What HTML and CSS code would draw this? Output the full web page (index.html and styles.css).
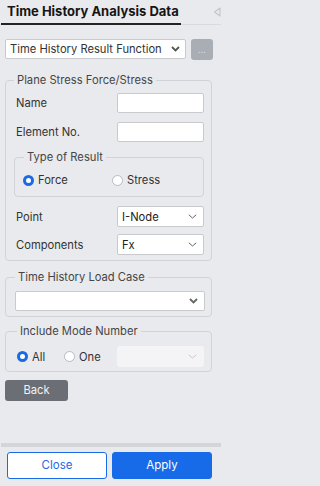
FILE: index.html
```html
<!DOCTYPE html>
<html>
<head>
<meta charset="utf-8">
<link rel="stylesheet" href="styles.css">
</head>
<body>
<div class="app">
  <div class="tabs">
    <div class="tab active">Time History Analysis Data</div>
    <div class="collapse">
      <svg width="8" height="10" viewBox="0 0 8 10"><path d="M7 1 L1.5 5 L7 9 Z" fill="none" stroke="#c4c6cb" stroke-width="1.2" stroke-linejoin="round"/></svg>
    </div>
  </div>

  <div class="main">
    <div class="top-row">
      <div class="select wide">
        <span class="select-text">Time History Result Function</span>
        <svg class="chev bold" width="9" height="6" viewBox="0 0 9 6"><path d="M1 1 L4.5 4.5 L8 1" fill="none" stroke="#555" stroke-width="1.8"/></svg>
      </div>
      <div class="more-btn">...</div>
    </div>

    <fieldset class="group g-plane">
      <legend>Plane Stress Force/Stress</legend>
      <div class="row">
        <span class="label">Name</span>
        <div class="input"></div>
      </div>
      <div class="row">
        <span class="label">Element No.</span>
        <div class="input"></div>
      </div>
      <fieldset class="group inner">
        <legend>Type of Result</legend>
        <div class="radios">
          <label class="radio r-force"><span class="dot on"></span>Force</label>
          <label class="radio r-stress"><span class="dot"></span>Stress</label>
        </div>
      </fieldset>
      <div class="row r-point">
        <span class="label">Point</span>
        <div class="select small">
          <span class="select-text">I-Node</span>
          <svg class="chev" width="9" height="5" viewBox="0 0 9 5"><path d="M0.8 0.8 L4.5 4 L8.2 0.8" fill="none" stroke="#666" stroke-width="1"/></svg>
        </div>
      </div>
      <div class="row r-comp">
        <span class="label">Components</span>
        <div class="select small">
          <span class="select-text">Fx</span>
          <svg class="chev" width="9" height="5" viewBox="0 0 9 5"><path d="M0.8 0.8 L4.5 4 L8.2 0.8" fill="none" stroke="#666" stroke-width="1"/></svg>
        </div>
      </div>
    </fieldset>

    <fieldset class="group g-load">
      <legend>Time History Load Case</legend>
      <div class="select full">
        <span class="select-text"></span>
        <svg class="chev bold" width="9" height="6" viewBox="0 0 9 6"><path d="M1 1 L4.5 4.5 L8 1" fill="none" stroke="#666" stroke-width="1.8"/></svg>
      </div>
    </fieldset>

    <fieldset class="group g-mode">
      <legend>Include Mode Number</legend>
      <div class="mode-row">
        <label class="radio r-all"><span class="dot on"></span>All</label>
        <label class="radio r-one"><span class="dot"></span>One</label>
        <div class="select small disabled">
          <span class="select-text"></span>
          <svg class="chev" width="9" height="5" viewBox="0 0 9 5"><path d="M0.8 0.8 L4.5 4 L8.2 0.8" fill="none" stroke="#c8c9cd" stroke-width="1"/></svg>
        </div>
      </div>
    </fieldset>

    <div class="back-btn">Back</div>
  </div>

  <div class="footer">
    <div class="btn close">Close</div>
    <div class="btn apply">Apply</div>
  </div>
</div>
</body>
</html>
```

FILE: styles.css
```css
* { box-sizing: border-box; }
html, body {
  margin: 0;
  padding: 0;
  background: #e9eaee;
}
body {
  font-family: Inter, "Noto Sans", "Liberation Sans", sans-serif;
  font-size: 11.2px;
  color: #333;
  width: 221px;
  height: 486px;
  overflow: hidden;
}
.app {
  display: flex;
  flex-direction: column;
  height: 486px;
}
.tabs {
  display: flex;
  flex: none;
  height: 25px;
  border-bottom: 1px solid #d9dadd;
  padding-left: 1px;
}
.tab {
  width: 180px;
  height: 25px;
  padding-left: 6px;
  padding-top: 3px;
  font-weight: 700;
  font-size: 13px;
  color: #151515;
  border-bottom: 2px solid #222;
  white-space: nowrap;
}
.collapse {
  margin-left: auto;
  padding-top: 6px;
}
.main {
  padding: 14px 0 0 5px;
  flex: 1;
}
.top-row {
  display: flex;
  align-items: flex-start;
  gap: 5px;
}
.select {
  background: #fff;
  border: 1px solid #c9cace;
  border-radius: 2px;
  height: 20px;
  display: flex;
  align-items: center;
  padding: 0 6px 0 4px;
  color: #222;
}
.select-text { flex: 1; white-space: nowrap; overflow: hidden; }
.select.wide { width: 181px; padding-right: 5px; }
.select.wide .select-text { color: #333; }
.select.small { width: 87px; height: 21px; }
.select.full { width: 190px; height: 20px; }
.select.disabled { background: #f4f4f6; border-color: #f4f4f6; }
.chev { flex: none; }
.more-btn {
  width: 22px;
  height: 21px;
  background: #a9adb4;
  border-radius: 3px;
  color: #d6d8dc;
  font-size: 9px;
  text-align: center;
  line-height: 22px;
}
fieldset.group {
  margin: 0;
  border: 1px solid #d2d3d7;
  border-radius: 4px;
  min-width: 0;
}
fieldset.group > legend {
  font-size: 11.2px;
  line-height: 14px;
  color: #454545;
  padding: 0 3px;
}
.g-plane {
  width: 207px;
  margin-top: 13px !important;
  padding: 6px 7px 5px 8px;
  display: flex;
  flex-direction: column;
}
.row {
  display: flex;
  align-items: center;
  justify-content: space-between;
  height: 20px;
  margin-bottom: 9px;
}
.row .label { padding-left: 2px; color: #333; }
.input {
  width: 87px;
  height: 20px;
  background: #fff;
  border: 1px solid #c9cace;
  border-radius: 2px;
}
.inner {
  width: 190px;
  padding: 9px 8px 9px 8px;
  margin-top: -1px !important;
  margin-bottom: 9px !important;
}
.inner > legend { margin-left: 1px; }
.radios { display: flex; }
.radio {
  display: flex;
  align-items: center;
  gap: 4px;
  color: #333;
}
.r-force { width: 89px; }
.dot {
  width: 11px;
  height: 11px;
  border-radius: 50%;
  background: #fff;
  border: 1px solid #b9bbc0;
}
.dot.on {
  border: 3px solid #1a6ae6;
}
.r-point { margin-bottom: 7px; height: 21px; }
.r-comp { margin-bottom: 0; height: 21px; }
.g-load {
  width: 207px;
  margin-top: 9px !important;
  padding: 7px 7px 5px 9px;
}
.g-mode {
  width: 207px;
  margin-top: 7px !important;
  padding: 8px 7px 4px 11px;
}
.mode-row {
  display: flex;
  align-items: center;
}
.r-all { width: 47px; }
.r-one { width: 53px; }
.back-btn {
  width: 63px;
  height: 21px;
  margin-top: 8px;
  background: #6b6e74;
  color: #f2f2f2;
  border-radius: 3px;
  text-align: center;
  line-height: 21px;
}
.footer {
  flex: none;
  border-top: 4px solid #d4d5d9;
  margin-left: 1px;
  display: flex;
  gap: 5px;
  padding: 5px 9px 7px 6px;
}
.btn {
  flex: 1;
  height: 27px;
  border-radius: 3px;
  text-align: center;
  line-height: 25px;
  font-size: 11.5px;
}
.btn.close {
  background: #fff;
  border: 1px solid #1a6ae6;
  color: #1a6ae6;
}
.btn.apply {
  background: #186be8;
  border: 1px solid #186be8;
  color: #fff;
}
```
